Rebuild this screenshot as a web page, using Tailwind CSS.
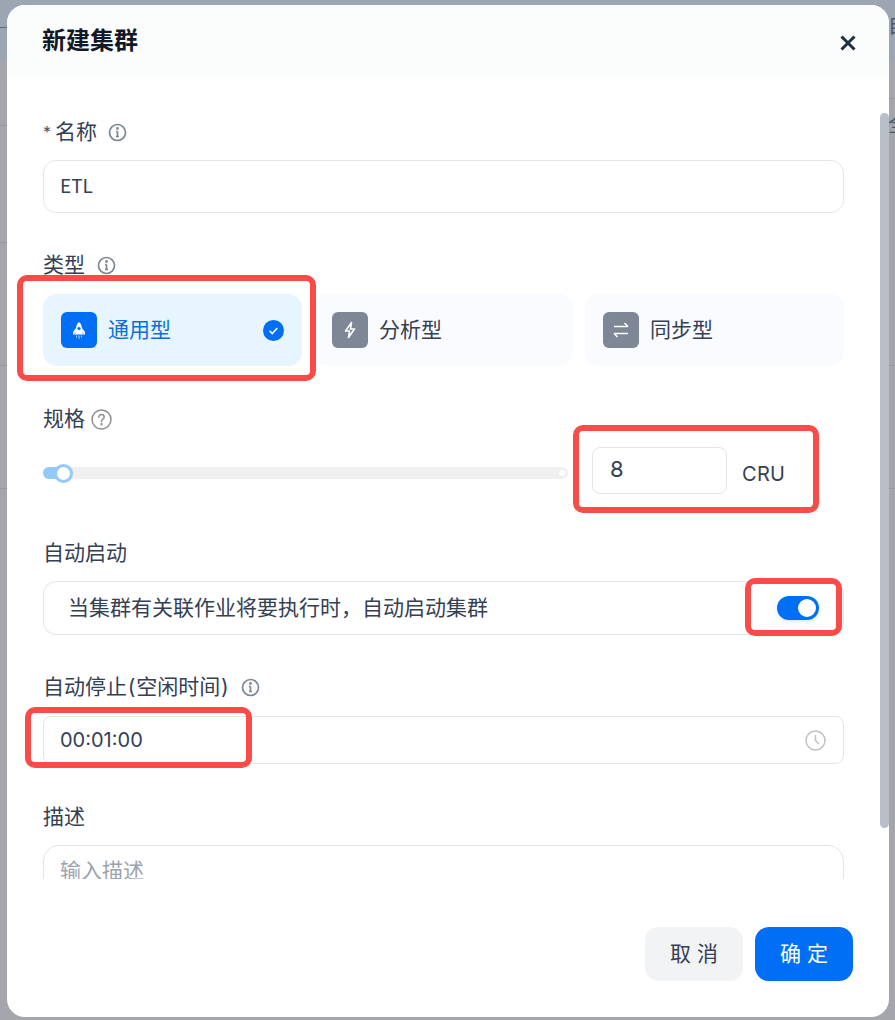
<!DOCTYPE html>
<html lang="zh-CN">
<head>
<meta charset="utf-8">
<title>新建集群</title>
<script src="https://cdn.jsdelivr.net/npm/@tailwindcss/browser@4"></script>
</head>
<body class="m-0 overflow-hidden">
<div class="relative w-[895px] h-[1020px] overflow-hidden bg-[#a5a6ab] font-['Inter','Noto_Sans_CJK_SC',sans-serif] text-[#344054]">

  <!-- dimmed page behind the dialog -->
  <div class="absolute inset-x-0 top-0 h-[62px] bg-[#9ba6b2]"></div>
  <div class="absolute left-0 w-[7px] top-[125px] h-px bg-[#97989d]"></div>
  <div class="absolute left-0 w-[7px] top-[242px] h-px bg-[#97989d]"></div>
  <div class="absolute left-0 w-[7px] top-[365px] h-px bg-[#97989d]"></div>
  <div class="absolute left-0 w-[7px] top-[488px] h-px bg-[#97989d]"></div>
  <div class="absolute left-0 w-[7px] top-[27px] h-px bg-[#5f6874]"></div>
  <div class="absolute right-0 w-[6px] top-[98px] h-px bg-[#97989d]"></div>
  <div class="absolute right-0 w-[6px] top-[365px] h-px bg-[#97989d]"></div>
  <div class="absolute right-0 w-[6px] top-[488px] h-px bg-[#97989d]"></div>
  <div class="absolute left-[888px] top-[11px] text-[20px] leading-[30px] text-[#4b5563]">自</div>
  <div class="absolute left-[888px] top-[110px] text-[20px] leading-[30px] text-[#4b5563]">全</div>

  <!-- dialog -->
  <div class="absolute left-[7px] top-[5px] w-[882px] h-[1012px] rounded-[18px] bg-white flex flex-col overflow-hidden">
    <div class="h-[72px] shrink-0 bg-[#fbfdfd] flex items-center justify-between pl-[35px] pr-[32px]">
      <h2 class="text-[24px] leading-[32px] font-bold text-[#111827]">新建集群</h2>
      <svg class="w-[18px] h-[18px] mt-[4px]" viewBox="0 0 18 18" fill="none" stroke="#1f2f46" stroke-width="3"><path d="M2.5 2.5l13 13M15.500 2.500l-13 13"/></svg>
    </div>

    <div class="h-[802px] shrink-0 overflow-hidden pl-[36px] pr-[45px] pt-[40px] text-[21px]">
      <!-- name -->
      <div class="h-[30px] flex items-center leading-[30px]">
        <span class="text-[16px] mr-[4px] text-[#4b5563]">*</span><span>名称</span>
        <svg class="w-[19px] h-[19px] ml-[11px]" viewBox="0 0 19 19" fill="none" stroke="#7c8794" stroke-width="1.700"><circle cx="9.500" cy="9.500" r="8"/><path d="M9.500 8.500v5M8 8.500h1.500M8 13.500h3"/><circle cx="9.500" cy="5.500" r="0.600"/></svg>
      </div>
      <div class="mt-[13px] h-[53px] rounded-[13px] border border-[#e3e5e9] flex items-center px-[16px] pb-[2px] text-[19px] font-['Noto_Sans_CJK_SC',sans-serif]">ETL</div>

      <!-- type -->
      <div class="mt-[37px] h-[30px] flex items-center leading-[30px]">
        <span>类型</span>
        <svg class="w-[19px] h-[19px] ml-[12px]" viewBox="0 0 19 19" fill="none" stroke="#7c8794" stroke-width="1.700"><circle cx="9.500" cy="9.500" r="8"/><path d="M9.500 8.500v5M8 8.500h1.500M8 13.500h3"/><circle cx="9.500" cy="5.500" r="0.600"/></svg>
      </div>
      <div class="mt-[14px] grid grid-cols-3 gap-[12px]">
        <div class="h-[72px] rounded-[14px] bg-[#e6f5fe] flex items-center pl-[18px] pr-[18px] text-[#0b6fdc]">
          <span class="w-[36px] h-[36px] rounded-[6px] bg-[#006ff5] flex items-center justify-center">
            <svg class="w-[14px] h-[17px]" viewBox="0 0 14 17" fill="none"><path d="M7 0c2 1.500 2.800 3.500 2.800 5.800l3.200 4.200v2.500H1V10l3.200-4.200C4.200 3.500 5 1.500 7 0z" fill="#fff"/><circle cx="7" cy="6.500" r="1.600" fill="#006ff5"/><path d="M3 10.500v1M11 10.500v1" stroke="#006ff5"/><path d="M4.500 13.500v2M7 13.500v3.500M9.500 13.500v2" stroke="#fff" stroke-opacity=".7"/></svg>
          </span>
          <span class="ml-[11px] flex-1">通用型</span>
          <svg class="w-[21px] h-[21px]" viewBox="0 0 21 21"><circle cx="10.500" cy="10.500" r="10.500" fill="#006ff5"/><path d="M6.500 10.800l2.800 2.800 5-5.600" fill="none" stroke="#fff" stroke-width="1.500"/></svg>
        </div>
        <div class="h-[72px] rounded-[14px] bg-[#f9fbff] flex items-center pl-[18px]">
          <span class="w-[36px] h-[36px] rounded-[6px] bg-[#7d8796] flex items-center justify-center">
            <svg class="w-[14px] h-[18px]" viewBox="0 0 14 18" fill="none" stroke="#fff" stroke-width="1.600" stroke-linejoin="round"><path d="M8.500 1.500L2.500 10h4l-1 6.500 6-8.500h-4z"/></svg>
          </span>
          <span class="ml-[11px]">分析型</span>
        </div>
        <div class="h-[72px] rounded-[14px] bg-[#f9fbff] flex items-center pl-[18px]">
          <span class="w-[36px] h-[36px] rounded-[6px] bg-[#7d8796] flex items-center justify-center">
            <svg class="w-[18px] h-[18px]" viewBox="0 0 18 18" fill="none" stroke="#fff" stroke-width="1.500"><path d="M2 5.500h14M12.500 2L16 5.500M16 12.500H2M5.500 16L2 12.500"/></svg>
          </span>
          <span class="ml-[11px]">同步型</span>
        </div>
      </div>

      <!-- size -->
      <div class="mt-[38px] h-[30px] flex items-center leading-[30px]">
        <span>规格</span>
        <svg class="w-[21px] h-[21px] ml-[6px]" viewBox="0 0 21 21" fill="none" stroke="#8f8f8f" stroke-width="1.500"><circle cx="10.500" cy="10.500" r="9.500"/><path d="M7.800 8.200c0-1.600 1.200-2.600 2.700-2.600s2.700 1 2.700 2.400c0 2.200-2.700 2.200-2.700 4.400" stroke-linecap="round"/><circle cx="10.500" cy="15.200" r="0.500"/></svg>
      </div>
      <div class="mt-[13px] h-[47px] flex items-center">
        <div class="relative w-[525px] h-[12px] rounded-full bg-[#f0f0f0] mt-[5px]">
          <div class="absolute left-0 top-0 h-full w-[20px] rounded-l-full bg-[#93c9fb]"></div>
          <div class="absolute left-[11px] -top-[3.500px] w-[19px] h-[19px] rounded-full bg-white border-[3px] border-[#93c9fb]"></div>
          <div class="absolute right-[3px] top-[3px] w-[6px] h-[6px] rounded-full bg-white"></div>
        </div>
        <div class="ml-[24px] w-[135px] h-[47px] rounded-[8px] border border-[#e3e5e9] flex items-center pl-[17px] pb-[2px] text-[22px]">8</div>
        <span class="ml-[15px] text-[20px] mt-[7px] tracking-[0.3px]">CRU</span>
      </div>

      <!-- auto start -->
      <div class="mt-[44px] h-[30px] flex items-center leading-[30px]">自动启动</div>
      <div class="mt-[13px] h-[54px] rounded-[13px] border border-[#e3e5e9] flex items-center justify-between pl-[24px] pr-[24px]">
        <span>当集群有关联作业将要执行时，自动启动集群</span>
        <span class="relative w-[42px] h-[24px] rounded-full bg-[#006ff5] shadow-[0_2px_4px_rgba(0,111,245,0.15)]">
          <span class="absolute right-[3px] top-[3px] w-[18px] h-[18px] rounded-full bg-white"></span>
        </span>
      </div>

      <!-- auto stop -->
      <div class="mt-[37px] h-[30px] flex items-center leading-[30px]">
        <span>自动停止<span class="mx-[0.750px]">(</span>空闲时间<span class="mx-[0.750px]">)</span></span>
        <svg class="w-[19px] h-[19px] ml-[12px]" viewBox="0 0 19 19" fill="none" stroke="#7c8794" stroke-width="1.700"><circle cx="9.500" cy="9.500" r="8"/><path d="M9.500 8.500v5M8 8.500h1.500M8 13.500h3"/><circle cx="9.500" cy="5.500" r="0.600"/></svg>
      </div>
      <div class="mt-[14px] h-[48px] rounded-[8px] border border-[#e3e5e9] flex items-center justify-between pl-[16px] pr-[17px] text-[20px]">
        <span>00:01:00</span>
        <svg class="w-[21px] h-[21px]" viewBox="0 0 21 21" fill="none" stroke="#c0c0c0" stroke-width="1.500"><circle cx="10.500" cy="10.500" r="9.500"/><path d="M10.500 5v5.500l3.500 3.500"/></svg>
      </div>

      <!-- description -->
      <div class="mt-[38px] h-[30px] flex items-center leading-[30px]">描述</div>
      <div class="mt-[13px] h-[110px] rounded-[16px] border border-[#e3e5e9] pl-[16px] pt-[10px] text-[21px] leading-[30px] text-[#9ca3af]">输入描述</div>
    </div>

    <div class="flex-1 flex justify-end items-start gap-[12px] pt-[48px] pr-[36px]">
      <button class="w-[98px] h-[54px] rounded-[14px] bg-[#f1f3f5] text-[21px] text-[#344054]">取 消</button>
      <button class="w-[98px] h-[54px] rounded-[14px] bg-[#006ff5] text-[21px] text-white">确 定</button>
    </div>

    <!-- scrollbar -->
    <div class="absolute right-0 top-[108px] w-[9px] h-[715px] rounded-full bg-[#b8bfc9]"></div>
  </div>

  <!-- annotation frames -->
  <div class="absolute left-[17px] top-[275px] w-[299px] h-[106px] rounded-[10px] border-[6px] border-[#f94c48]"></div>
  <div class="absolute left-[573px] top-[425px] w-[246px] h-[88px] rounded-[10px] border-[6px] border-[#f94c48]"></div>
  <div class="absolute left-[745px] top-[578px] w-[97px] h-[58px] rounded-[10px] border-[6px] border-[#f94c48]"></div>
  <div class="absolute left-[25px] top-[707px] w-[227px] h-[61px] rounded-[10px] border-[6px] border-[#f94c48]"></div>
</div>
</body>
</html>
